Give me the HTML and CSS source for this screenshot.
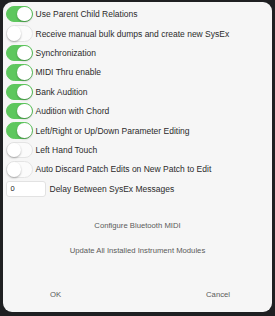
FILE: index.html
```html
<!DOCTYPE html>
<html>
<head>
<meta charset="utf-8">
<link rel="stylesheet" href="styles.css">
</head>
<body>
<div class="dialog">
  <div class="options">
    <div class="row"><span class="toggle on"></span><span class="label">Use Parent Child Relations</span></div>
    <div class="row"><span class="toggle"></span><span class="label">Receive manual bulk dumps and create new SysEx</span></div>
    <div class="row"><span class="toggle on"></span><span class="label">Synchronization</span></div>
    <div class="row"><span class="toggle on"></span><span class="label">MIDI Thru enable</span></div>
    <div class="row"><span class="toggle on"></span><span class="label">Bank Audition</span></div>
    <div class="row"><span class="toggle on"></span><span class="label">Audition with Chord</span></div>
    <div class="row"><span class="toggle on"></span><span class="label">Left/Right or Up/Down Parameter Editing</span></div>
    <div class="row"><span class="toggle"></span><span class="label">Left Hand Touch</span></div>
    <div class="row"><span class="toggle"></span><span class="label">Auto Discard Patch Edits on New Patch to Edit</span></div>
    <div class="row"><span class="field">0</span><span class="label">Delay Between SysEx Messages</span></div>
  </div>
  <div class="actions">
    <div class="action">Configure Bluetooth MIDI</div>
    <div class="action">Update All Installed Instrument Modules</div>
  </div>
  <div class="footer">
    <span class="btn">OK</span>
    <span class="btn">Cancel</span>
  </div>
</div>
</body>
</html>
```

FILE: styles.css
```css
html, body {
  margin: 0;
  padding: 0;
}
body {
  width: 275px;
  height: 316px;
  background: #1f2022;
  font-family: "Liberation Sans", Arial, sans-serif;
  overflow: hidden;
}
.dialog {
  margin: 2px 0 0 3px;
  width: 269px;
  height: 310px;
  box-sizing: border-box;
  background: #f6f6f6;
  border-radius: 9px;
  padding-top: 2.5px;
  display: flex;
  flex-direction: column;
}
.options {
  padding-left: 2.5px;
  display: flex;
  flex-direction: column;
}
.row {
  height: 19.4px;
  display: flex;
  align-items: center;
}
.toggle {
  position: relative;
  width: 27px;
  height: 16.5px;
  box-sizing: border-box;
  border-radius: 9px;
  background: #fbfbfb;
  border: 1px solid #e4e4e4;
  flex: none;
}
.toggle::after {
  content: "";
  position: absolute;
  left: 0;
  top: 0;
  width: 14.5px;
  height: 14.5px;
  border-radius: 50%;
  background: #fff;
  box-shadow: 0 1px 2px rgba(0,0,0,0.3);
}
.toggle.on {
  background: #5ec75e;
  border-color: #5ec75e;
}
.toggle.on::after {
  left: auto;
  right: 0;
}
.label {
  margin-left: 3px;
  font-size: 8.5px;
  color: #2b2b2b;
  white-space: nowrap;
}
.field {
  width: 40px;
  height: 16px;
  box-sizing: border-box;
  border: 1px solid #e2e2e2;
  border-radius: 3px;
  background: #fff;
  font-size: 7.5px;
  color: #222;
  padding-left: 4px;
  line-height: 14px;
  flex: none;
}
.field + .label {
  margin-left: 4px;
}
.actions {
  margin-top: 20.5px;
  display: flex;
  flex-direction: column;
  align-items: center;
  gap: 11px;
}
.action {
  font-size: 7.7px;
  color: #5a5a5a;
  height: 14px;
  line-height: 14px;
}
.footer {
  margin-top: auto;
  margin-bottom: 10px;
  display: flex;
  justify-content: space-between;
  padding: 0 42px 0 47px;
}
.btn {
  font-size: 7.7px;
  color: #5a5a5a;
  line-height: 14px;
}
```
